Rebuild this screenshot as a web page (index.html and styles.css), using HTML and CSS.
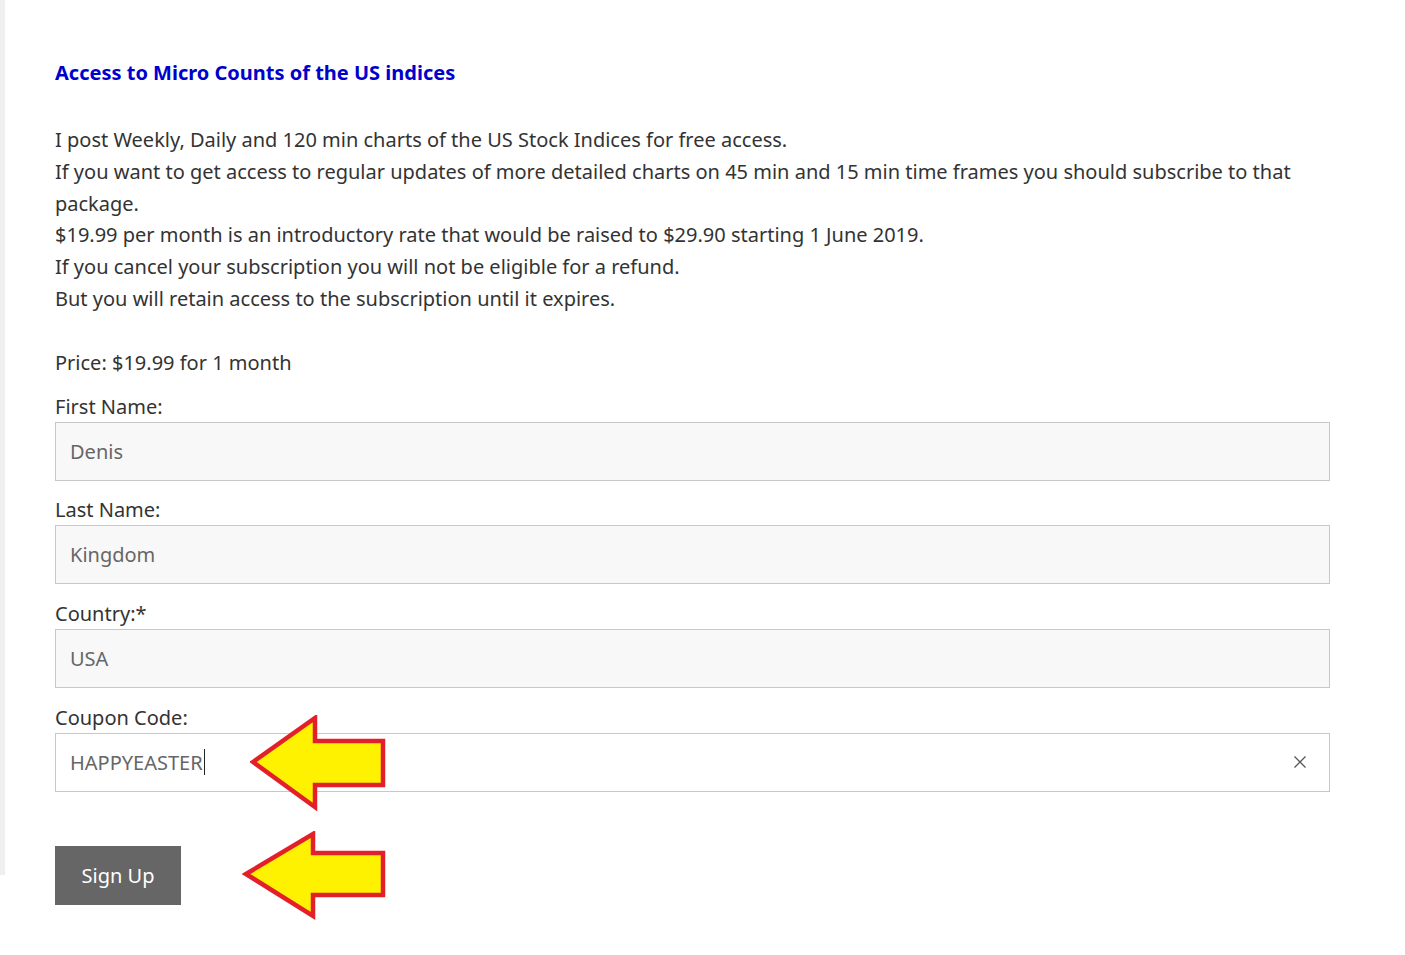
FILE: index.html
```html
<!DOCTYPE html>
<html lang="en">
<head>
    <meta charset="UTF-8">
    <title>Access to Micro Counts of the US indices</title>
    <link rel="stylesheet" href="styles.css">
</head>
<body>
    <div class="page">
        <h2 class="title">Access to Micro Counts of the US indices</h2>

        <div class="intro">
            I post Weekly, Daily and 120 min charts of the US Stock Indices for free access.<br>
            If you want to get access to regular updates of more detailed charts on 45 min and 15 min time frames you should subscribe to that package.<br>
            $19.99 per month is an introductory rate that would be raised to $29.90 starting 1 June 2019.<br>
            If you cancel your subscription you will not be eligible for a refund.<br>
            But you will retain access to the subscription until it expires.
        </div>

        <div class="price">Price: $19.99 for 1 month</div>

        <form class="signup">
            <label class="field">
                <span class="label">First Name:</span>
                <input class="input" type="text" value="Denis" readonly>
            </label>
            <label class="field">
                <span class="label">Last Name:</span>
                <input class="input" type="text" value="Kingdom" readonly>
            </label>
            <label class="field">
                <span class="label">Country:*</span>
                <input class="input" type="text" value="USA" readonly>
            </label>
            <div class="field">
                <span class="label">Coupon Code:</span>
                <div class="input input-active">
                    <span>HAPPYEASTER</span><span class="caret"></span>
                    <svg class="clear" width="14" height="14" viewBox="0 0 14 14"><path d="M1.5 1.5l11 11M12.5 1.5l-11 11" stroke="#555" stroke-width="1.3" fill="none"/></svg>
                    <!-- annotation arrow -->
                    <svg class="arrow arrow-coupon" width="138" height="96" viewBox="0 0 138 96">
                        <polygon points="3,47 65,3 65,26 133,26 133,70 65,70 65,92" fill="#fff200" stroke="#e3202a" stroke-width="4.5" stroke-linejoin="miter"/>
                    </svg>
                </div>
            </div>

            <div class="actions">
                <button class="button" type="button">Sign Up</button>
                <svg class="arrow arrow-button" width="146" height="90" viewBox="0 0 146 90">
                    <polygon points="4,43 71,3 71,22 141,22 141,64 71,64 71,85" fill="#fff200" stroke="#e3202a" stroke-width="4.5" stroke-linejoin="miter"/>
                </svg>
            </div>
        </form>
    </div>
</body>
</html>
```

FILE: styles.css
```css
* {
    box-sizing: border-box;
}
body {
    margin: 0;
    font-family: 'Noto Sans', 'Open Sans', sans-serif;
    color: #333;
    background: #fff linear-gradient(#efefef, #efefef) no-repeat 0 0 / 5px 875px;
}
.page {
    width: 1330px;
    padding: 58px 0 50px 55px;
}
.title {
    margin: 0 0 36px;
    font-size: 20px;
    line-height: 30px;
    font-weight: bold;
    color: #0000cc;
}
.intro {
    font-size: 20px;
    line-height: 31.8px;
    margin-bottom: 33px;
}
.price {
    font-size: 20px;
    line-height: 30px;
    margin-bottom: 14px;
}
.signup {
    display: flex;
    flex-direction: column;
}
.field {
    display: flex;
    flex-direction: column;
}
.label {
    font-size: 20px;
    line-height: 30px;
}
.input {
    display: flex;
    align-items: center;
    width: 1275px;
    height: 59px;
    padding: 0 14px;
    margin-bottom: 14.7px;
    border: 1px solid #c8c8c8;
    background: #f8f8f8;
    color: #666;
    font-family: inherit;
    font-size: 20px;
    outline: none;
}
.input-active {
    position: relative;
    background: #fff;
}
.caret {
    display: inline-block;
    width: 1px;
    height: 26px;
    background: #222;
    margin-left: 1px;
}
.clear {
    margin-left: auto;
    margin-right: 8px;
}
.arrow {
    position: absolute;
}
.arrow-coupon {
    left: 194px;
    top: -19px;
}
.actions {
    position: relative;
    margin-top: 39px;
}
.button {
    background: #666;
    color: #fff;
    border: none;
    height: 59px;
    width: 126px;
    font-family: inherit;
    font-size: 20px;
    cursor: pointer;
}
.arrow-button {
    left: 187px;
    top: -15px;
}
```
